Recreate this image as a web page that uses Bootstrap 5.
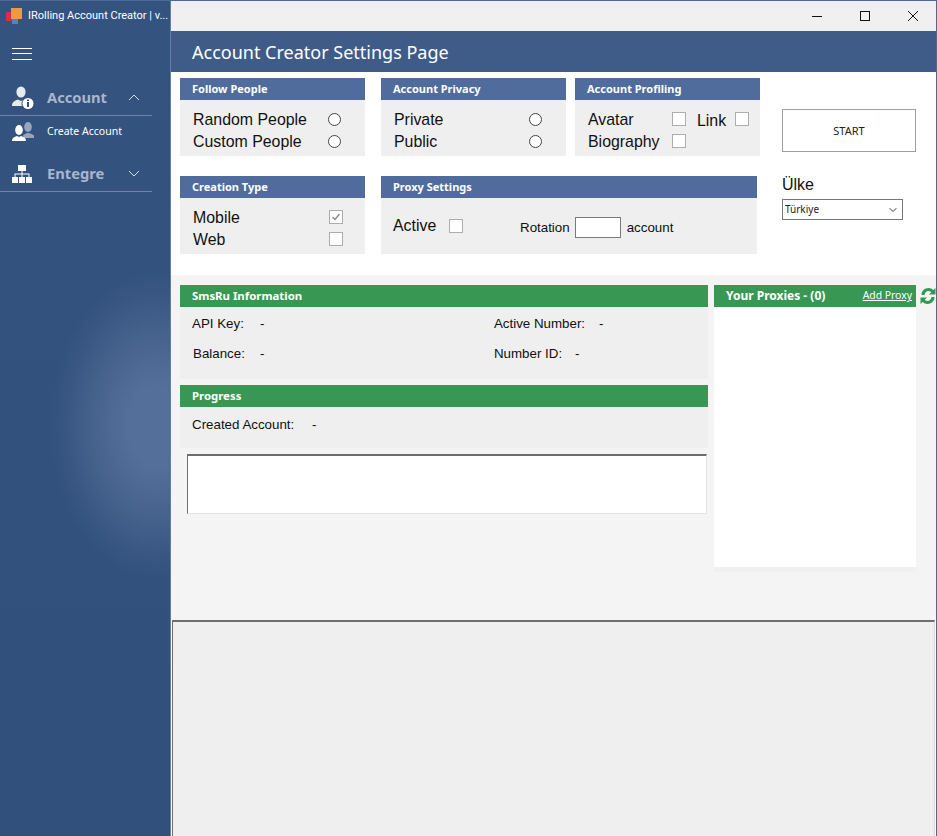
<!DOCTYPE html>
<html lang="en">
<head>
    <meta charset="UTF-8">
    <meta name="viewport" content="width=device-width, initial-scale=1.0">
    <title>IRolling Account Creator</title>
    <link href="https://cdn.jsdelivr.net/npm/bootstrap@5.3.0/dist/css/bootstrap.min.css" rel="stylesheet">
    <style>
        html, body { height: 100%; }
        body {
            background: #fff;
            font-family: "Liberation Sans", Arial, sans-serif;
            color: #111;
            overflow: hidden;
        }
        .app-shell { height: 836px; border-top: 1px solid #4a6a9a; border-right: 1px solid #4a6a9a; }

        /* left menu */
        .side-menu {
            width: 170px;
            flex: none;
            background:
                radial-gradient(ellipse 105px 155px at 155px 425px, #54709a 0, #54709a 25%, rgba(84,112,154,.55) 60%, rgba(84,112,154,.15) 85%, rgba(84,112,154,0) 100%),
                linear-gradient(#35537f, #31507c);
            color: #fff;
            font-family: "Noto Sans", sans-serif;
        }
        .brand-row { height: 30px; padding-left: 6px; gap: 6px; font-family: Roboto, sans-serif; font-size: 11px; white-space: nowrap; }
        .brand-row svg { flex: none; }
        .burger { margin: 17px 0 0 12px; width: 20px; height: 12px; border-top: 1px solid #fff; border-bottom: 1px solid #fff; position: relative; }
        .burger::after { content: ""; position: absolute; left: 0; right: 0; top: 4px; border-top: 1px solid #fff; }
        .menu-head {
            width: 152px; height: 34px;
            padding-left: 12px;
            padding-bottom: 2px;
            border-bottom: 1px solid #6b84a8;
            color: #a9b6cb;
            font-size: 14.7px;
            font-weight: 700;
        }
        .menu-first { margin-top: 22px; }
        .menu-second { margin-top: 11px; }
        .menu-head .menu-label { margin-left: 13px; }
        .menu-second .menu-label { margin-left: 15px; }
        .menu-head svg.chev { margin-left: auto; margin-right: 12px; }
        .menu-sub { height: 31px; padding-left: 12px; font-size: 10.5px; }
        .menu-sub .menu-label { margin-left: 13px; }

        /* main side */
        .main-side { border-left: 1px solid #5f7fae; min-width: 0; }
        .title-strip { height: 30px; background: #f0f0f0; }
        .win-btn { width: 48px; height: 30px; }
        .win-btn:last-child { width: 46px; margin-left: 1px; }
        .page-head {
            height: 41px;
            padding: 2px 0 0 21px;
            background: #3f5c88;
            color: #fff;
            font-family: "Noto Sans", sans-serif;
            font-size: 18px;
        }
        .top-zone { height: 203px; background: #fff; padding: 6px 0 0 9px; }
        .panel-row { gap: 16px; margin-bottom: 20px; }
        .set-panel { width: 185px; height: 78px; background: #efefef; flex: none; }
        .set-panel.is-wide { width: 376px; }
        .set-panel.is-tight { margin-left: -7px; }
        .panel-title {
            height: 22px;
            padding-left: 12px;
            background: #4f6c9c;
            color: #fff;
            font-family: "Noto Sans", sans-serif;
            font-weight: 700;
            font-size: 11px;
        }
        .panel-body { padding: 8px 24px 0 13px; font-size: 15.9px; }
        .panel-body.chk-body { padding-right: 22px; }
        .panel-body.prof-body { padding-right: 0; }
        .panel-body.proxy-body { height: 56px; padding: 0 0 0 12px; }
        .opt-row { height: 22px; }
        .opt-row span { padding-top: 2px; }
        .opt-row .prof-name { width: 84px; }
        .opt-row .link-name { margin: 2px 0 0 11px; width: 38px; }
        .active-name { width: 56px; }
        .small-name { font-size: 13.33px; margin-top: 3px; }
        .rotation-name { margin-left: 57px; }
        .set-radio.form-check-input, .set-check.form-check-input {
            margin: 0;
            flex: none;
            box-shadow: none;
            background-color: #fff;
        }
        .set-radio.form-check-input { width: 13px; height: 13px; border: 1px solid #444; }
        .set-radio.form-check-input:checked { background-image: none; }
        .set-check.form-check-input { width: 14px; height: 14px; border: 1px solid #adadad; border-radius: 0; }
        .set-check.form-check-input:checked {
            background-color: #fff;
            border-color: #adadad;
            background-size: 10px;
            background-image: url("data:image/svg+xml,%3csvg xmlns='http://www.w3.org/2000/svg' viewBox='0 0 10 10'%3e%3cpath fill='none' stroke='%23888' stroke-width='1.4' d='M1.5 5l2.5 2.5L8.5 2'/%3e%3c/svg%3e");
        }
        .side-tools { margin-left: 22px; padding-top: 31px; }
        .start-btn {
            width: 134px; height: 43px;
            border: 1px solid #a0a0a0;
            border-radius: 0;
            background: #fff;
            color: #222;
            font-family: "Noto Sans", sans-serif;
            font-size: 11px;
            padding: 2px 0 0;
        }
        .ulke-label { font-size: 16px; margin-top: 22px; line-height: 22px; }
        .ulke-select.form-select {
            width: 121px; height: 21px; margin-top: 3px;
            padding: 0 0 0 2px;
            border: 1px solid #777;
            border-radius: 0;
            font-family: "Noto Sans", sans-serif;
            font-size: 10px;
            color: #222;
            background-position: right 4px center;
            background-size: 10px 8px;
        }
        .rotate-input.form-control {
            width: 46px; height: 21px;
            margin: 3px 6px 0 5px;
            padding: 0 2px;
            border: 1px solid #7a7a7a;
            border-radius: 0;
            font-size: 13px;
            flex: none;
        }

        .low-zone { flex: 1; background: #f4f4f4; padding: 10px 0 0 9px; gap: 6px; min-height: 0; }
        .info-col { width: 528px; flex: none; }
        .info-box { background: #efefef; font-size: 13.33px; }
        .green-title {
            height: 22px;
            padding-left: 12px;
            background: #389853;
            color: #fff;
            font-family: "Noto Sans", sans-serif;
            font-weight: 700;
            font-size: 11.4px;
        }
        .proxy-count { font-size: 12px; }
        .sms-box { height: 72px; margin-bottom: 6px; padding: 2px 0 0 12px; }
        .info-line { height: 30px; }
        .info-key { width: 68px; }
        .info-key.is-shift { padding-left: 1px; }
        .num-key { margin-left: 229.5px; }
        .num-key.is-active { width: 105px; }
        .num-key.is-id { width: 81px; }
        .prog-box { height: 41px; padding: 8px 0 0 12px; }
        .prog-line { height: 20px; }
        .prog-key { width: 120px; }
        .log-box {
            width: 520px; height: 60px;
            margin: 6px 0 0 7px;
            background: #fff;
            border-style: solid;
            border-width: 2px 1px 1px 1px;
            border-color: #6d6d6d #e3e3e3 #e3e3e3 #6d6d6d;
        }
        .proxy-col { width: 202px; flex: none; height: 287px; background: #f0f0f0; }
        .proxy-list { height: 260px; background: #fff; }
        .add-link { color: #fff; font-family: "Noto Sans", sans-serif; font-size: 10.4px; font-weight: 400; margin-right: 4px; }
        .add-link:hover { color: #fff; }
        .sync-icon { margin: 2px 0 0 -3px; flex: none; }
        .bottom-panel {
            height: 216px;
            margin: 0 1px 0 1px;
            background: #efefef;
            border-style: solid;
            border-width: 2px 1px 0 1px;
            border-color: #6e6e6e #d8d8d8 #d8d8d8 #6e6e6e;
        }
    </style>
</head>
<body>

<div class="app-shell d-flex">
    <div class="side-menu">
        <div class="brand-row d-flex align-items-center">
            <svg width="16" height="16" viewBox="0 0 16 16">
                <rect x="0" y="4" width="6" height="9" fill="#d2343f"/>
                <rect x="5" y="0" width="11" height="11" fill="#f09a3e"/>
                <rect x="6" y="11" width="6" height="5" fill="#4a86c8"/>
            </svg>
            <span>IRolling Account Creator | v...</span>
        </div>
        <div class="burger"></div>

        <div class="menu-head menu-first d-flex align-items-center">
            <svg width="22" height="23" viewBox="0 0 22 23" fill="#fff">
                <ellipse cx="9" cy="6" rx="4.6" ry="5.6" fill="#e6ebf2"/>
                <path d="M0 20c0-4 2.500-5.500 6-6.500l3 1.500 2-1c-1.500 1.500-2 4-1 6z" fill="#e6ebf2"/>
                <circle cx="16" cy="17.500" r="5.500"/>
                <rect x="15" y="16" width="2" height="5" fill="#31507d"/>
                <rect x="15" y="13.500" width="2" height="1.500" fill="#31507d"/>
            </svg>
            <span class="menu-label">Account</span>
            <svg class="chev" width="12" height="7" viewBox="0 0 12 7" fill="none" stroke="#d5dce7"><path d="M1 6l5-5 5 5"/></svg>
        </div>
        <div class="menu-sub d-flex align-items-center">
            <svg width="22" height="22" viewBox="0 0 22 22">
                <ellipse cx="16" cy="6" rx="3.800" ry="5" fill="#98a6bb"/>
                <path d="M11 14c3-1 3-2 5-2s4 1 6 2.500V17H12z" fill="#98a6bb"/>
                <ellipse cx="7" cy="9" rx="3.800" ry="5" fill="#fff"/>
                <path d="M0 20c0-3 2-4 5-5l2 1 2-1c3 1 5 2 5 5z" fill="#fff"/>
            </svg>
            <span class="menu-label">Create Account</span>
        </div>
        <div class="menu-head menu-second d-flex align-items-center">
            <svg width="20" height="18" viewBox="0 0 20 18" fill="#fff">
                <rect x="6" y="0" width="8" height="6"/>
                <rect x="0" y="12" width="6" height="6"/>
                <rect x="7" y="12" width="6" height="6"/>
                <rect x="14" y="12" width="6" height="6"/>
                <path d="M9.500 6h1v2.500H17.500V12h-1V9.500h-6V12h-1V9.500h-6V12h-1V8.500h7z"/>
            </svg>
            <span class="menu-label">Entegre</span>
            <svg class="chev" width="12" height="7" viewBox="0 0 12 7" fill="none" stroke="#d5dce7"><path d="M1 1l5 5 5-5"/></svg>
        </div>
    </div>

    <div class="main-side flex-grow-1 d-flex flex-column">
        <div class="title-strip d-flex justify-content-end">
            <div class="win-btn d-flex align-items-center justify-content-center">
                <svg width="10" height="10" viewBox="0 0 10 10"><path d="M0 5.500h10" stroke="#111"/></svg>
            </div>
            <div class="win-btn d-flex align-items-center justify-content-center">
                <svg width="10" height="10" viewBox="0 0 10 10"><rect x=".5" y=".5" width="9" height="9" fill="none" stroke="#111"/></svg>
            </div>
            <div class="win-btn d-flex align-items-center justify-content-center">
                <svg width="10" height="10" viewBox="0 0 10 10"><path d="M0 0l10 10M10 0L0 10" stroke="#111"/></svg>
            </div>
        </div>
        <div class="page-head d-flex align-items-center">Account Creator Settings Page</div>

        <div class="top-zone d-flex">
            <div>
                <div class="panel-row d-flex">
                    <div class="set-panel">
                        <div class="panel-title d-flex align-items-center">Follow People</div>
                        <div class="panel-body">
                            <div class="opt-row d-flex align-items-center justify-content-between"><span>Random People</span><input class="form-check-input set-radio" type="radio" name="follow"></div>
                            <div class="opt-row d-flex align-items-center justify-content-between"><span>Custom People</span><input class="form-check-input set-radio" type="radio" name="follow"></div>
                        </div>
                    </div>
                    <div class="set-panel">
                        <div class="panel-title d-flex align-items-center">Account Privacy</div>
                        <div class="panel-body">
                            <div class="opt-row d-flex align-items-center justify-content-between"><span>Private</span><input class="form-check-input set-radio" type="radio" name="privacy"></div>
                            <div class="opt-row d-flex align-items-center justify-content-between"><span>Public</span><input class="form-check-input set-radio" type="radio" name="privacy"></div>
                        </div>
                    </div>
                    <div class="set-panel is-tight">
                        <div class="panel-title d-flex align-items-center">Account Profiling</div>
                        <div class="panel-body prof-body">
                            <div class="opt-row d-flex align-items-center">
                                <span class="prof-name">Avatar</span><input class="form-check-input set-check" type="checkbox">
                                <span class="link-name">Link</span><input class="form-check-input set-check" type="checkbox">
                            </div>
                            <div class="opt-row d-flex align-items-center">
                                <span class="prof-name">Biography</span><input class="form-check-input set-check" type="checkbox">
                            </div>
                        </div>
                    </div>
                </div>
                <div class="panel-row d-flex">
                    <div class="set-panel">
                        <div class="panel-title d-flex align-items-center">Creation Type</div>
                        <div class="panel-body chk-body">
                            <div class="opt-row d-flex align-items-center justify-content-between"><span>Mobile</span><input class="form-check-input set-check" type="checkbox" checked></div>
                            <div class="opt-row d-flex align-items-center justify-content-between"><span>Web</span><input class="form-check-input set-check" type="checkbox"></div>
                        </div>
                    </div>
                    <div class="set-panel is-wide">
                        <div class="panel-title d-flex align-items-center">Proxy Settings</div>
                        <div class="panel-body proxy-body d-flex align-items-center">
                            <span class="active-name">Active</span><input class="form-check-input set-check" type="checkbox">
                            <span class="small-name rotation-name">Rotation</span>
                            <input class="form-control rotate-input" type="text">
                            <span class="small-name">account</span>
                        </div>
                    </div>
                </div>
            </div>
            <div class="side-tools">
                <button class="btn start-btn" type="button">START</button>
                <div class="ulke-label">Ülke</div>
                <select class="form-select ulke-select"><option>Türkiye</option></select>
            </div>
        </div>

        <div class="low-zone d-flex">
            <div class="info-col">
                <div class="green-title d-flex align-items-center">SmsRu Information</div>
                <div class="info-box sms-box">
                    <div class="info-line d-flex align-items-center">
                        <span class="info-key">API Key:</span><span>-</span>
                        <span class="num-key is-active">Active Number:</span><span>-</span>
                    </div>
                    <div class="info-line d-flex align-items-center">
                        <span class="info-key is-shift">Balance:</span><span>-</span>
                        <span class="num-key is-id">Number ID:</span><span>-</span>
                    </div>
                </div>
                <div class="green-title d-flex align-items-center">Progress</div>
                <div class="info-box prog-box">
                    <div class="prog-line d-flex align-items-center">
                        <span class="prog-key">Created Account:</span><span>-</span>
                    </div>
                </div>
                <div class="log-box"></div>
            </div>
            <div class="proxy-col">
                <div class="green-title d-flex align-items-center justify-content-between">
                    <span class="proxy-count">Your Proxies - (0)</span>
                    <a class="add-link" href="#">Add Proxy</a>
                </div>
                <div class="proxy-list"></div>
            </div>
            <svg class="sync-icon" width="18" height="18" viewBox="0 0 17 18" fill="#2f9a4f">
                <path d="M2 8C2 4 5 1 9 1c2 0 3.500 .8 4.800 2L16 1v6.500H9.500l2.300-2.300C11 4.400 10 4 9 4 7 4 5.500 5.500 5 8z"/>
                <path d="M15 10c0 4-3 7-7 7-2 0-3.500-.8-4.800-2L1 17v-6.500h6.500l-2.300 2.300c.8.800 1.800 1.200 2.800 1.200 2 0 3.500-1.500 4-4z"/>
            </svg>
        </div>

        <div class="bottom-panel"></div>
    </div>
</div>

<script src="https://cdn.jsdelivr.net/npm/bootstrap@5.3.0/dist/js/bootstrap.bundle.min.js"></script>
</body>
</html>
